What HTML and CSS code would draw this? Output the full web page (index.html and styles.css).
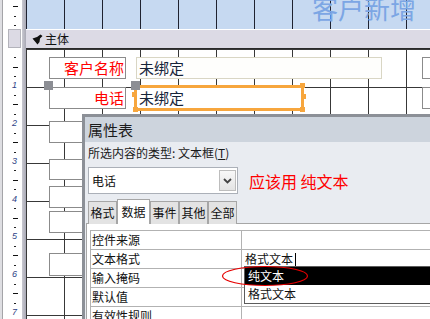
FILE: index.html
```html
<!DOCTYPE html>
<html lang="zh-CN">
<head>
<meta charset="utf-8">
<title>客户新增 - 设计视图</title>
<link rel="stylesheet" href="styles.css">
</head>
<body>
<div class="app">
  <div class="ruler">
    <div class="r-edge"></div>
    <div class="r-line"></div>
    <div class="r-scale">
      <div class="r-head">
        <i class="c"><b class="dash"></b></i>
        <i class="c"><b class="dot"></b></i>
        <i class="c"><b class="dot"></b></i>
      </div>
      <div class="r-sel"></div>
      <div class="r-body">
        <i class="c"></i>
        <i class="c"><b class="dot"></b></i><i class="c"><b class="dash"></b></i><i class="c"><b class="dot"></b></i>
        <i class="c"><span class="num">1</span></i>
        <i class="c"><b class="dot"></b></i><i class="c"><b class="dash"></b></i><i class="c"><b class="dot"></b></i>
        <i class="c"><span class="num">2</span></i>
        <i class="c"><b class="dot"></b></i><i class="c"><b class="dash"></b></i><i class="c"><b class="dot"></b></i>
        <i class="c"><span class="num">3</span></i>
        <i class="c"><b class="dot"></b></i><i class="c"><b class="dash"></b></i><i class="c"><b class="dot"></b></i>
        <i class="c"><span class="num">4</span></i>
        <i class="c"><b class="dot"></b></i><i class="c"><b class="dash"></b></i><i class="c"><b class="dot"></b></i>
        <i class="c"><span class="num">5</span></i>
        <i class="c"><b class="dot"></b></i><i class="c"><b class="dash"></b></i><i class="c"><b class="dot"></b></i>
        <i class="c"><span class="num">6</span></i>
        <i class="c"><b class="dot"></b></i><i class="c"><b class="dash"></b></i><i class="c"><b class="dot"></b></i>
        <i class="c"><span class="num">7</span></i>
      </div>
    </div>
    <div class="r-band"></div>
  </div>

  <div class="canvas">
    <div class="header">
      <span class="form-title">客户新增</span>
    </div>
    <div class="section-bar">
      <svg class="sec-icon" width="11" height="11" viewBox="0 0 11 11"><path d="M0.5 4.5 L5 3 L8.5 0.5 L10.5 2 L8 4.5 L7.5 8 L5.5 10.5 Z" fill="#111"/></svg>
      <span class="sec-name">主体</span>
    </div>
    <div class="detail">
      <div class="ctl label l1">客户名称</div>
      <div class="ctl textbox t1">未绑定</div>
      <div class="ctl label l2">电话</div>
      <div class="ctl textbox t2 selected">未绑定
        <i class="h h-tl"></i><i class="h h-ml"></i><i class="h h-bl"></i>
        <i class="h h-tr"></i><i class="h h-mr"></i><i class="h h-br"></i>
      </div>
      <i class="move-handle m1"></i>
      <i class="move-handle m2"></i>
      <div class="ctl label r1"></div>
      <div class="ctl label r2"></div>
      <div class="ctl label b1"></div>
      <div class="ctl label b2"></div>
      <div class="ctl label b3"></div>
      <div class="ctl label b4"></div>
      <div class="ctl label b5"></div>
    </div>
  </div>

  <div class="props">
    <div class="props-title">属性表</div>
    <div class="props-body">
      <div class="type-line">所选内容的类型: 文本框(<u class="acc">T</u>)</div>
      <div class="combo-row">
        <div class="combo">
          <span>电话</span>
          <span class="combo-btn"><svg width="9" height="6" viewBox="0 0 9 6"><path d="M1 1 L4.5 4.5 L8 1" fill="none" stroke="#444" stroke-width="1.8"/></svg></span>
        </div>
        <span class="hint">应该用 纯文本</span>
      </div>
      <div class="tabs">
        <span class="tab">格式</span>
        <span class="tab active">数据</span>
        <span class="tab">事件</span>
        <span class="tab">其他</span>
        <span class="tab">全部</span>
      </div>
      <div class="panel">
        <div class="pgrid">
          <div class="prow"><span class="pk">控件来源</span><span class="pv"></span></div>
          <div class="prow"><span class="pk">文本格式</span><span class="pv">格式文本<i class="caret"></i></span></div>
          <div class="prow"><span class="pk">输入掩码</span><span class="pv"></span></div>
          <div class="prow"><span class="pk">默认值</span><span class="pv"></span></div>
          <div class="prow"><span class="pk">有效性规则</span><span class="pv"></span></div>
        </div>
      </div>
    </div>
    <div class="droplist">
      <div class="opt hl">纯文本</div>
      <div class="opt">格式文本</div>
    </div>
    <svg class="circle" width="88" height="22" viewBox="0 0 88 22"><ellipse cx="44" cy="11" rx="42.5" ry="9.5" fill="none" stroke="#e60000" stroke-width="1.2"/></svg>
  </div>
</div>
</body>
</html>
```

FILE: styles.css
```css
html, body {
  margin: 0;
  padding: 0;
  background: #fff;
}
.app {
  position: relative;
  width: 430px;
  height: 319px;
  overflow: hidden;
  display: flex;
  font-family: "Noto Sans CJK SC", "Noto Sans", sans-serif;
}

/* ---------- vertical ruler ---------- */
.ruler {
  width: 26px;
  flex: none;
  display: flex;
  height: 100%;
}
.r-edge { width: 2px; background: #dedee2; }
.r-line { width: 1px; background: #a4a4a8; }
.r-scale {
  width: 19px;
  background: #fff;
  display: flex;
  flex-direction: column;
}
.r-band {
  width: 4px;
  background: linear-gradient(to right, #c9c9d1, #a9a9b5);
}
.r-head {
  height: 27px;
  padding-top: 2px;
  display: flex;
  flex-direction: column;
}
.c {
  display: flex;
  align-items: center;
  height: 9.45px;
  flex: none;
}
.dot {
  display: block;
  width: 2px;
  height: 1px;
  margin-left: 11px;
  background: #222;
}
.dash {
  display: block;
  width: 5px;
  height: 1px;
  margin-left: 10px;
  background: #111;
}
.num {
  display: block;
  margin-left: 9px;
  font-family: "Liberation Sans", sans-serif;
  font-size: 9px;
  line-height: 9px;
  color: #2e3f86;
}
.r-sel {
  height: 19px;
  width: 13px;
  margin-left: 5px;
  box-sizing: border-box;
  border: 1px solid #b3b3bb;
  background: #dcdae4;
}
.r-body {
  margin-top: -4.5px;
  display: flex;
  flex-direction: column;
}

/* ---------- design canvas ---------- */
.canvas {
  flex: 1;
  display: flex;
  flex-direction: column;
  min-width: 0;
}
.header {
  position: relative;
  height: 29px;
  flex: none;
  background-color: #c6d9f1;
  background-image: linear-gradient(to right, transparent 37px, #1f2230 37px);
  background-size: 38px 100%;
  background-position: 1px 0;
  overflow: hidden;
}
.form-title {
  position: absolute;
  left: 286px;
  top: -5px;
  font-size: 26px;
  line-height: 26px;
  color: #7ca6e4;
  white-space: nowrap;
}
.section-bar {
  height: 18px;
  flex: none;
  border-top: 1px solid #fff;
  border-bottom: 1px solid #2a2a2a;
  background: #dcdae5;
  display: flex;
  align-items: center;
  padding-left: 6px;
  gap: 2px;
}
.sec-name {
  font-size: 12px;
  line-height: 18px;
  color: #111;
}
.detail {
  position: relative;
  flex: 1;
  background-color: #fff;
  background-image:
    linear-gradient(to right, transparent 37px, #383838 37px),
    linear-gradient(to bottom, transparent 37px, #383838 37px);
  background-size: 38px 100%, 100% 38px;
  background-position: 1px 0, 0 1px;
  overflow: hidden;
}

.ctl {
  position: absolute;
  box-sizing: border-box;
  height: 22px;
  white-space: nowrap;
}
.label {
  border: 1px solid #8b8b8b;
  background: #fff;
  color: #ff0000;
  font-size: 15px;
  line-height: 19px;
  text-align: right;
  padding-right: 1px;
  width: 77px;
  left: 23px;
}
.textbox {
  border: 1px solid #d9d6c4;
  background: #fefefc;
  color: #16243a;
  font-size: 15px;
  line-height: 19px;
  padding-left: 2px;
}
.l1 { top: 8px; }
.l2 { top: 38px; }
.t1 { left: 110px; top: 8px; width: 246px; }
.t2 {
  left: 108px;
  top: 36px;
  width: 170px;
  height: 26px;
  border: 3px solid #f7a63d;
  background: #fff;
  padding-left: 2px;
  line-height: 19px;
}
.h {
  position: absolute;
  width: 5px;
  height: 5px;
  background: #f7a63d;
}
.h-tl { left: -4px; top: -4px; }
.h-ml { left: -5px; top: 4px; }
.h-bl { left: -4px; bottom: -4px; }
.h-tr { right: -4px; top: -5px; }
.h-mr { right: -5px; top: 6px; }
.h-br { right: -4px; bottom: -4px; }
.move-handle {
  position: absolute;
  width: 9px;
  height: 9px;
  background: #8c8e94;
}
.m1 { left: 18px; top: 32px; }
.m2 { left: 105px; top: 32px; }
.r1 { left: 396px; top: 8px; width: 30px; }
.r2 { left: 396px; top: 38px; width: 30px; }
.b1 { top: 72px; }
.b2 { top: 110px; height: 21px; }
.b3 { top: 137px; }
.b4 { top: 162px; }
.b5 { top: 204px; height: 23px; }

/* ---------- property sheet ---------- */
.props {
  position: absolute;
  left: 82px;
  top: 114px;
  width: 360px;
  height: 215px;
  border-left: 3px solid #8c9097;
  border-top: 3px solid #8c9097;
  background: #e9ecf1;
  font-size: 12px;
  color: #111;
}
.props-title {
  height: 25px;
  line-height: 25px;
  background: #cdd4dd;
  padding-left: 3px;
  font-size: 15px;
  color: #1b1b1b;
}
.props-body {
  padding-left: 1px;
}
.type-line {
  height: 21px;
  line-height: 21px;
  padding-left: 2px;
  color: #1a1a1a;
}
.acc {
  text-decoration: underline;
}
.combo-row {
  display: flex;
  align-items: center;
  margin-top: 4px;
  margin-left: 2px;
  height: 27px;
}
.combo {
  width: 150px;
  height: 27px;
  box-sizing: border-box;
  border: 1px solid #abb0b8;
  background: #fff;
  display: flex;
  align-items: center;
  justify-content: space-between;
  padding: 0 1px 0 3px;
}
.combo-btn {
  width: 17px;
  height: 21px;
  box-sizing: border-box;
  border: 1px solid #bdbdbd;
  background: linear-gradient(#f8f8f8, #e4e4e4);
  display: flex;
  align-items: center;
  justify-content: center;
}
.hint {
  margin-left: 11px;
  color: #ff0000;
  font-size: 16px;
  line-height: 20px;
}
.tabs {
  display: flex;
  align-items: flex-end;
  margin: 5px 0 -1px 2px;
  height: 25px;
  position: relative;
  z-index: 1;
}
.tab {
  box-sizing: border-box;
  width: 29px;
  height: 23px;
  line-height: 22px;
  text-align: center;
  border: 1px solid #a6a6a6;
  border-bottom: none;
  background: #e3e3e3;
}
.tab.active {
  width: 33px;
  height: 25px;
  line-height: 24px;
  background: #fff;
}
.panel {
  background: #fff;
  border-top: 1px solid #a6a6a6;
  border-left: 1px solid #a6a6a6;
  padding: 6px 0 0 3px;
  height: 100px;
}
.pgrid {
  border-left: 1px solid #b2b2b2;
}
.prow {
  display: grid;
  grid-template-columns: 151px 1fr;
  height: 18px;
  border-top: 1px solid #b2b2b2;
  line-height: 18px;
}
.pk {
  padding-left: 1px;
  border-right: 1px solid #b2b2b2;
}
.pv {
  padding-left: 3px;
  display: flex;
  align-items: center;
}
.caret {
  display: inline-block;
  width: 1px;
  height: 13px;
  margin-left: 2px;
  background: #000;
}
.droplist {
  position: absolute;
  left: 159px;
  top: 149px;
  width: 200px;
  border: 1px solid #5c5c5c;
  background: #fff;
}
.opt {
  height: 18px;
  line-height: 18px;
  padding-left: 3px;
  color: #111;
}
.opt.hl {
  background: #000;
  color: #fff;
}
.circle {
  position: absolute;
  left: 136px;
  top: 148px;
}
```
